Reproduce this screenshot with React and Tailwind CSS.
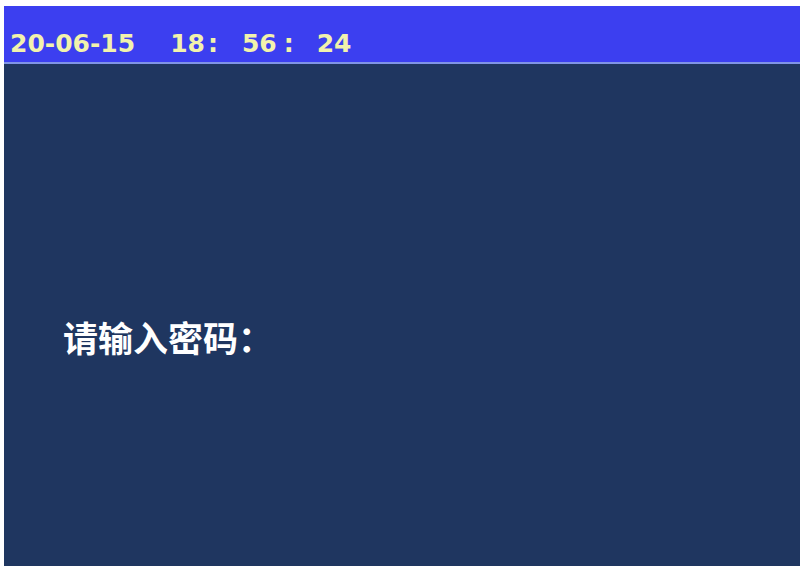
export default function App() {
    return (
        <div className="w-[800px] h-[566px] bg-white pt-[6px] pl-[4px] flex flex-col overflow-hidden">
            {/* Status bar */}
            <div className="h-[58px] shrink-0 bg-[#3c3ff0] border-b-2 border-[#8094e6] pt-[25px] pl-[6px] flex items-start text-[25px] leading-none font-bold text-[#f2f2ac]" style={{ fontFamily: '"DejaVu Sans", sans-serif' }}>
                <span>20-06-15</span>
                <span className="ml-[35px]">18</span>
                <span className="ml-[3px]">:</span>
                <span className="ml-[24px]">56</span>
                <span className="ml-[7px]">:</span>
                <span className="ml-[23px]">24</span>
            </div>

            {/* Main area */}
            <div className="flex-1 bg-[#1f3660] pt-[255px] pl-[59px]">
                <div className="text-[35px] leading-none font-bold text-white" style={{ fontFamily: '"Noto Sans CJK SC", sans-serif' }}>
                    请输入密码：
                </div>
            </div>
        </div>
    )
}
